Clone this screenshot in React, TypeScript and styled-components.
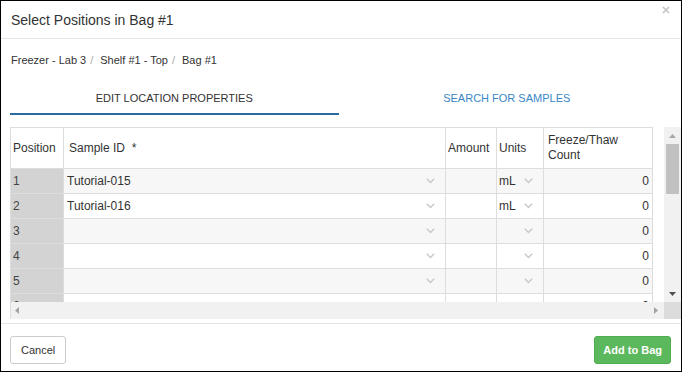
import React from 'react';
import styled, { createGlobalStyle } from 'styled-components';

const Global = createGlobalStyle`
  html, body { margin: 0; padding: 0; background: #fff; }
  body { font-family: "Liberation Sans", Arial, sans-serif; color: #333; }
  * { box-sizing: border-box; }
`;

const Modal = styled.div`
  width: 682px;
  height: 372px;
  border: 1px solid #000;
  background: #fff;
  display: flex;
  flex-direction: column;
  overflow: hidden;
`;

const Header = styled.div`
  position: relative;
  flex: none;
  height: 38px;
  border-bottom: 1px solid #e5e5e5;
  display: flex;
  align-items: center;
  padding: 0 10px;
`;

const Title = styled.h4`
  margin: 0;
  font-size: 14px;
  font-weight: normal;
  color: #333;
`;

const Close = styled.button`
  position: absolute;
  top: 5px;
  right: 11px;
  width: 8px;
  height: 8px;
  padding: 0;
  border: 0;
  background: none;
  display: flex;
`;

const Body = styled.div`
  flex: none;
  display: flex;
  flex-direction: column;
  padding: 0 10px 0 9px;
`;

const Breadcrumb = styled.ol`
  margin: 13px 0 0;
  padding: 0 0 0 1px;
  list-style: none;
  display: flex;
  font-size: 11px;
  line-height: 16px;
  color: #333;
`;

const Crumb = styled.li`
  display: flex;
`;

const Sep = styled.span`
  color: #aaa;
  margin: 0 7px 0 4px;
`;

const Tabs = styled.div`
  margin-top: 14px;
  display: grid;
  grid-template-columns: 1fr 1fr;
  column-gap: 4px;
`;

const Tab = styled.div<{ $active?: boolean }>`
  padding: 8px 0 7px;
  line-height: 16px;
  font-size: 11px;
  text-align: center;
  text-transform: uppercase;
  color: ${(p) => (p.$active ? '#333' : '#3a87c6')};
  border-bottom: 2px solid ${(p) => (p.$active ? '#2b6a9c' : 'transparent')};
`;

const GridFrame = styled.div`
  margin-top: 12px;
  margin-right: -10px;
  border-left: 1px solid #ddd;
  display: grid;
  grid-template-columns: 1fr 17px;
  grid-template-rows: 175px 17px;
`;

const Viewport = styled.div`
  overflow: hidden;
  background: #fff;
`;

const COLS = '53px 382px 51px 47px 109px';

const HeadRow = styled.div`
  display: grid;
  grid-template-columns: ${COLS};
  width: 642px;
  height: 42px;
  border-top: 1px solid #ddd;
  border-bottom: 1px solid #ddd;
  background: #fff;
`;

const HeadCell = styled.div<{ $pad?: number }>`
  border-right: 1px solid #ddd;
  display: flex;
  align-items: center;
  padding-left: ${(p) => p.$pad ?? 2}px;
  font-size: 12px;
  line-height: 15px;
  color: #333;
`;

const Row = styled.div<{ $odd?: boolean }>`
  display: grid;
  grid-template-columns: ${COLS};
  width: 642px;
  height: 25px;
  border-bottom: 1px solid #ddd;
  background: ${(p) => (p.$odd ? '#f7f7f7' : '#fff')};
`;

const Cell = styled.div<{ $pos?: boolean; $right?: boolean; $padL?: number; $padR?: number }>`
  border-right: 1px solid #ddd;
  display: flex;
  align-items: center;
  justify-content: ${(p) => (p.$right ? 'flex-end' : 'space-between')};
  padding-left: ${(p) => p.$padL ?? 2}px;
  padding-right: ${(p) => p.$padR ?? 3}px;
  font-size: 12px;
  color: ${(p) => (p.$pos ? '#444' : '#333')};
  background: ${(p) => (p.$pos ? '#d3d3d3' : 'transparent')};
  white-space: nowrap;
  overflow: hidden;
`;

const VScroll = styled.div`
  background: #f1f1f1;
  display: flex;
  flex-direction: column;
`;

const ArrowBox = styled.div`
  flex: none;
  height: 17px;
  width: 17px;
  display: flex;
  align-items: center;
  justify-content: center;
`;

const Track = styled.div`
  flex: 1;
  display: flex;
  flex-direction: column;
  align-items: center;
`;

const Thumb = styled.div`
  width: 13px;
  height: 50px;
  background: #c1c1c1;
`;

const HScroll = styled.div`
  background: #f1f1f1;
  display: flex;
  align-items: center;
  justify-content: space-between;
  padding: 0 6px 0 4px;
`;

const Corner = styled.div`
  background: #dcdcdc;
`;

const Footer = styled.div`
  flex: 1;
  margin-top: 4px;
  border-top: 1px solid #e5e5e5;
  display: flex;
  justify-content: space-between;
  align-items: flex-start;
  padding: 12px 10px 0 9px;
`;

const Button = styled.button<{ $primary?: boolean }>`
  height: 28px;
  padding: 0 ${(p) => (p.$primary ? 8 : 10)}px;
  border-radius: 3px;
  font-family: "Liberation Sans", Arial, sans-serif;
  font-size: 11px;
  font-weight: ${(p) => (p.$primary ? 'bold' : 'normal')};
  color: ${(p) => (p.$primary ? '#fff' : '#333')};
  background: ${(p) => (p.$primary ? '#5cb85c' : '#fff')};
  border: 1px solid ${(p) => (p.$primary ? '#4cae4c' : '#ccc')};
`;

const Chevron = () => (
  <svg width="9" height="6" viewBox="0 0 9 6">
    <polyline points="0.8,0.8 4.5,4.5 8.2,0.8" fill="none" stroke="#c8c8c8" strokeWidth="1.4" />
  </svg>
);

const Tri = ({ dir, color }: { dir: 'up' | 'down' | 'left' | 'right'; color: string }) => {
  const pts: Record<string, string> = {
    up: '0,4 3.5,0 7,4',
    down: '0,0 7,0 3.5,4',
    left: '4,0 4,7 0,3.5',
    right: '0,0 0,7 4,3.5',
  };
  const vertical = dir === 'up' || dir === 'down';
  return (
    <svg width={vertical ? 7 : 4} height={vertical ? 4 : 7} viewBox={vertical ? '0 0 7 4' : '0 0 4 7'}>
      <polygon points={pts[dir]} fill={color} />
    </svg>
  );
};

type R = { pos: string; id: string; unit: string; count: string };
const rows: R[] = [
  { pos: '1', id: 'Tutorial-015', unit: 'mL', count: '0' },
  { pos: '2', id: 'Tutorial-016', unit: 'mL', count: '0' },
  { pos: '3', id: '', unit: '', count: '0' },
  { pos: '4', id: '', unit: '', count: '0' },
  { pos: '5', id: '', unit: '', count: '0' },
  { pos: '6', id: '', unit: '', count: '0' },
];

export default function App() {
  return (
    <>
      <Global />
      <Modal>
        <Header>
          <Title>Select Positions in Bag #1</Title>
          <Close aria-label="close">
            <svg width="8" height="8" viewBox="0 0 8 8">
              <path d="M1 1 L7 7 M7 1 L1 7" stroke="#c4c4c4" strokeWidth="1.6" />
            </svg>
          </Close>
        </Header>
        <Body>
          <Breadcrumb>
            <Crumb>Freezer - Lab 3</Crumb>
            <Crumb><Sep>/</Sep>Shelf #1 - Top</Crumb>
            <Crumb><Sep>/</Sep>Bag #1</Crumb>
          </Breadcrumb>
          <Tabs>
            <Tab $active>Edit Location Properties</Tab>
            <Tab>Search for Samples</Tab>
          </Tabs>
          <GridFrame>
            <Viewport>
              <HeadRow>
                <HeadCell>Position</HeadCell>
                <HeadCell $pad={5}>Sample ID&nbsp; *</HeadCell>
                <HeadCell>Amount</HeadCell>
                <HeadCell>Units</HeadCell>
                <HeadCell $pad={4}>Freeze/Thaw<br />Count</HeadCell>
              </HeadRow>
              {rows.map((r, i) => (
                <Row key={r.pos} $odd={i % 2 === 0}>
                  <Cell $pos>{r.pos}</Cell>
                  <Cell $padL={3} $padR={10}>
                    <span>{r.id}</span>
                    <Chevron />
                  </Cell>
                  <Cell />
                  <Cell $padL={2} $padR={10}>
                    <span>{r.unit}</span>
                    <Chevron />
                  </Cell>
                  <Cell $right>{r.count}</Cell>
                </Row>
              ))}
            </Viewport>
            <VScroll>
              <ArrowBox><Tri dir="up" color="#a8a8a8" /></ArrowBox>
              <Track><Thumb /></Track>
              <ArrowBox><Tri dir="down" color="#505050" /></ArrowBox>
            </VScroll>
            <HScroll>
              <Tri dir="left" color="#a3a3a3" />
              <Tri dir="right" color="#a3a3a3" />
            </HScroll>
            <Corner />
          </GridFrame>
        </Body>
        <Footer>
          <Button>Cancel</Button>
          <Button $primary>Add to Bag</Button>
        </Footer>
      </Modal>
    </>
  );
}
